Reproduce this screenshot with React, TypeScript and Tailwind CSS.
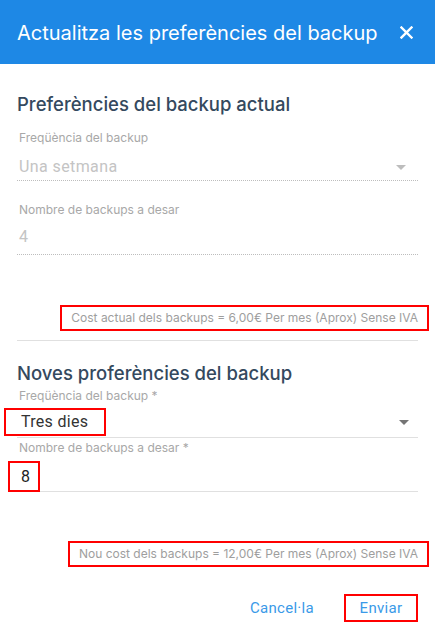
import React from "react";

function Arrow() {
  return (
    <svg width="10" height="5" viewBox="0 0 10 5" className="shrink-0">
      <path d="M0 0 L10 0 L5 5 Z" fill="currentColor" />
    </svg>
  );
}

export default function App() {
  return (
    <div className="w-[435px] h-[636px] bg-white overflow-hidden font-['Roboto',sans-serif]">
      <div className="h-16 bg-[#1e88e5] flex items-center justify-between pl-[17px] pr-[22px]">
        <span className="text-white text-[20px] leading-7 pt-[1px] font-['Inter',sans-serif]">
          Actualitza les preferències del backup
        </span>
        <svg width="13" height="13" viewBox="0 0 13 13" className="mt-[1px]">
          <path d="M1.5 1.5 L11.5 11.5 M11.5 1.5 L1.5 11.5" stroke="white" strokeWidth="2.4" strokeLinecap="square" />
        </svg>
      </div>

      <div className="px-[17px]">
        <h2 className="mt-[26px] h-7 leading-7 text-[18.5px] font-medium text-[#34495e] font-['Inter',sans-serif]">
          Preferències del backup actual
        </h2>
        <div className="mt-[12px] pl-[2px] text-[12px] leading-4 text-[#a8a8a8] font-['Inter',sans-serif]">Freqüència del backup</div>
        <div className="mt-[9px] flex items-center justify-between pl-[2px] pr-[12px] h-6 border-b border-dotted border-[#bdbdbd] pb-[1px] box-content">
          <span className="text-[16px] leading-6 text-[#c4c4c4] tracking-[0.4px]">Una setmana</span>
          <span className="text-[#bdbdbd]"><Arrow /></span>
        </div>
        <div className="mt-[21px] pl-[2px] text-[12px] leading-4 text-[#a8a8a8] font-['Inter',sans-serif]">Nombre de backups a desar</div>
        <div className="mt-[7px] pl-[2px] h-6 pb-[5px] box-content border-b border-dotted border-[#bdbdbd]">
          <span className="text-[16px] leading-6 text-[#c4c4c4]">4</span>
        </div>

        <div className="mt-[50px] flex justify-end -mr-[11px]">
          <span className="border-2 border-[#ff0000] h-[26px] pl-[9px] pr-[9px] flex items-center text-[12px] text-[#9e9e9e] font-['Inter',sans-serif]">
            Cost actual dels backups = 6,00€ Per mes (Aprox) Sense IVA
          </span>
        </div>
        <div className="mt-[9px] border-t border-[#e0e0e0]" />

        <h2 className="mt-[18px] h-7 leading-7 text-[18.5px] font-medium text-[#34495e] font-['Inter',sans-serif]">
          Noves proferències del backup
        </h2>
        <div className="mt-[1px] pl-[2px] text-[12px] leading-4 text-[#a8a8a8] font-['Inter',sans-serif]">Freqüència del backup *</div>
        <div className="mt-[3px] flex items-center justify-between pr-[9px] h-[30px] border-b border-[#e0e0e0] box-content">
          <span className="-ml-[13px] border-2 border-[#ff0000] h-[28px] w-[102px] pl-[15px] flex items-center text-[16px] text-[#333] tracking-[0.3px]">
            Tres dies
          </span>
          <span className="text-[#757575]"><Arrow /></span>
        </div>
        <div className="mt-[2px] pl-[2px] text-[12px] leading-4 text-[#a8a8a8] font-['Inter',sans-serif]">Nombre de backups a desar *</div>
        <div className="mt-[5px] h-[30px] border-b border-[#e0e0e0] box-content flex">
          <span className="-ml-[9px] border-2 border-[#ff0000] h-[31px] w-[32px] pl-[11px] flex items-center text-[16px] text-[#222]">
            8
          </span>
        </div>

        <div className="mt-[49px] flex justify-end -mr-[11px]">
          <span className="border-2 border-[#ff0000] h-[26px] pl-[9px] pr-[9px] flex items-center text-[12px] text-[#9e9e9e] font-['Inter',sans-serif]">
            Nou cost dels backups = 12,00€ Per mes (Aprox) Sense IVA
          </span>
        </div>

        <div className="mt-[27px] flex justify-end items-center">
          <span className="text-[15px] text-[#3a9ae8] tracking-[0.3px] mr-[30px]">Cancel·la</span>
          <span className="border-2 border-[#ff0000] h-[28px] w-[74px] flex items-center justify-center text-[15px] text-[#3a9ae8] tracking-[0.3px]">
            Enviar
          </span>
        </div>
      </div>
    </div>
  );
}
